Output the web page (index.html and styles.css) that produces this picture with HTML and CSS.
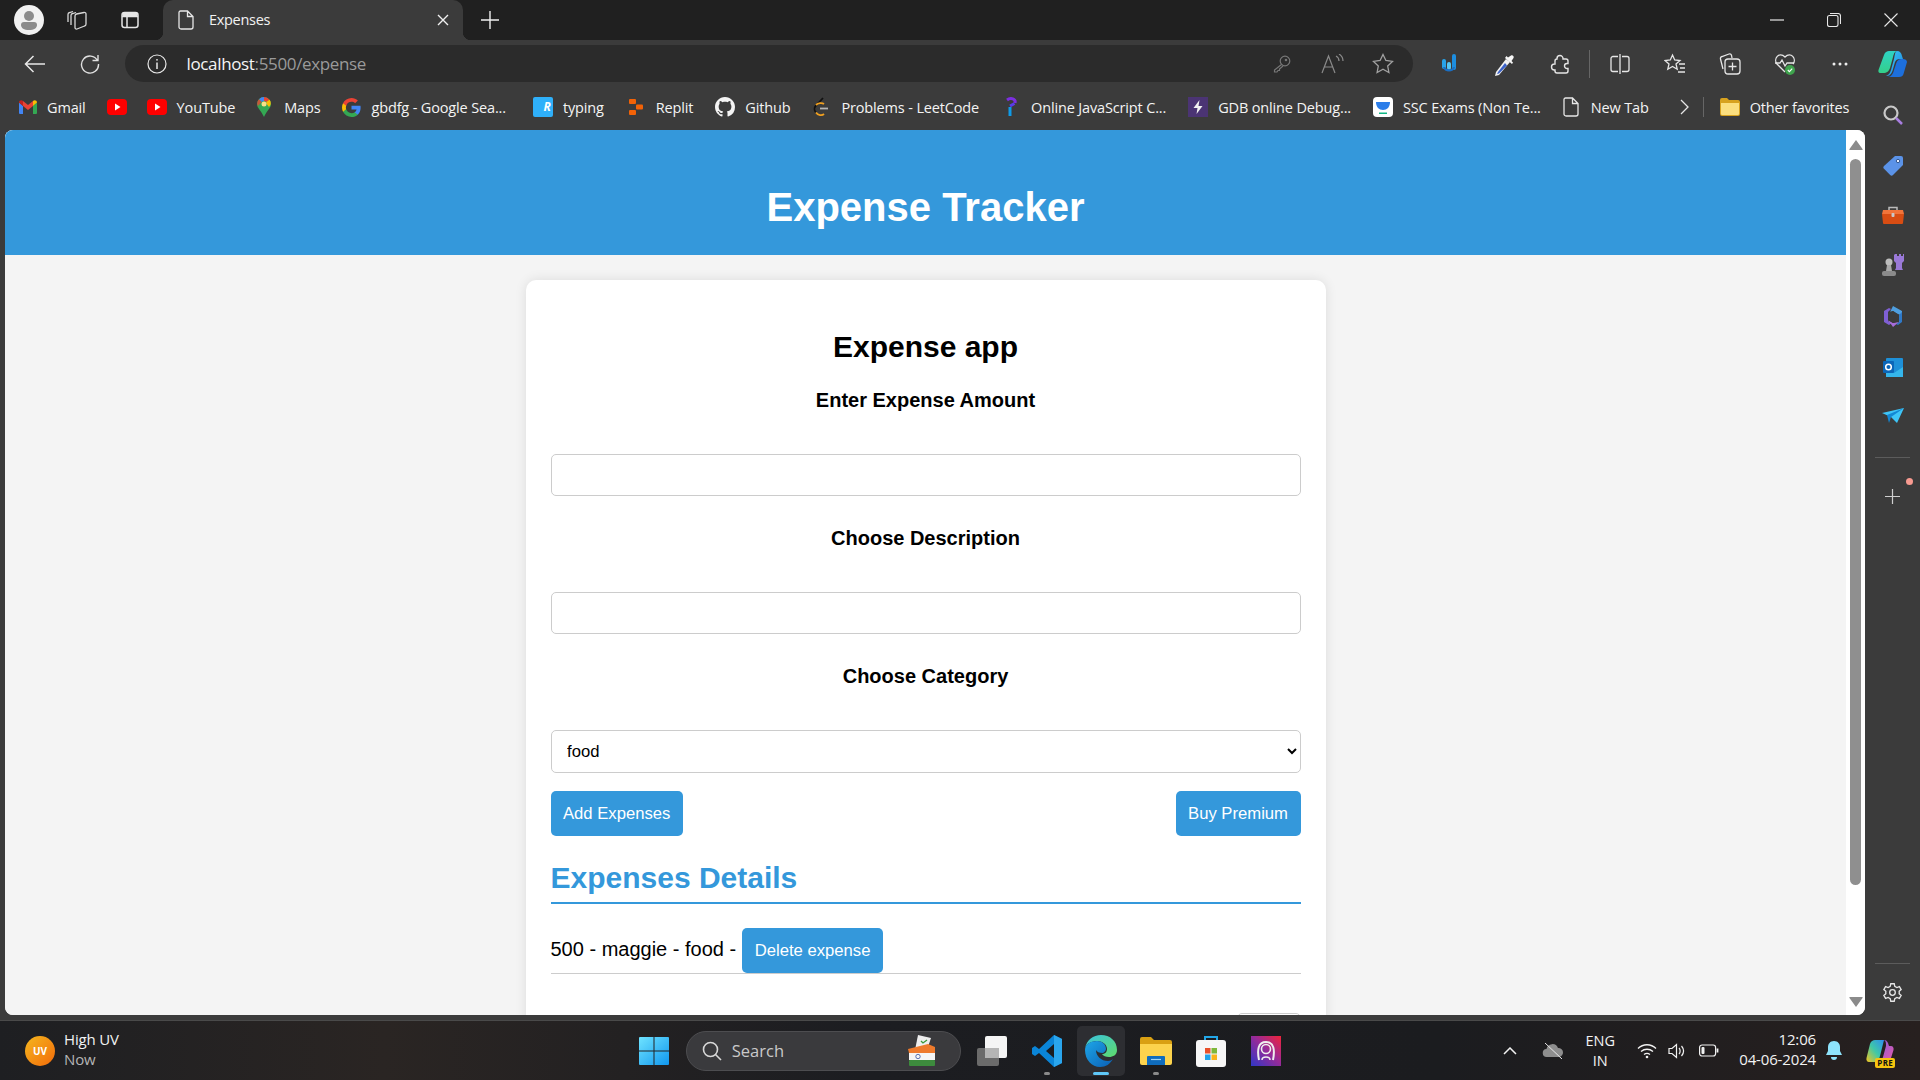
FILE: index.html
```html
<!DOCTYPE html>
<html lang="en">
<head>
<meta charset="utf-8">
<title>Expenses</title>
<link rel="stylesheet" href="styles.css">
</head>
<body>
<div class="window">
  <div class="titlebar">
    <div class="tb-slot tb-first"><svg width="30" height="30" viewBox="0 0 30 30"><circle cx="15" cy="15" r="15" fill="#f1f1f1"/><circle cx="15" cy="11" r="5" fill="#8b8b8b"/><path d="M7 20a3 3 0 0 1 3-3h10a3 3 0 0 1 3 3c0 3-3 5-8 5s-8-2-8-5z" fill="#8b8b8b"/></svg></div>
    <div class="tb-slot tb-second"><svg width="22" height="22" viewBox="0 0 22 22" fill="none" stroke="#d8d8d8" stroke-width="1.3"><path d="M2 13V5.500a2 2 0 0 1 1.500-2L7 2.500M5 16V6.500a2 2 0 0 1 1.500-2L10 3.500"/><path d="M9 7a2 2 0 0 1 1.500-2L18 3.500a1.500 1.500 0 0 1 2 1.500V15a2 2 0 0 1-1.500 2L11 20a1.500 1.500 0 0 1-2-1.500z" fill="#202020"/></svg></div>
    <div class="tb-slot"><svg width="20" height="20" viewBox="0 0 20 20" fill="none" stroke="#e6e6e6" stroke-width="1.5"><rect x="2" y="2.500" width="16" height="15" rx="2.500"/><path d="M2 6.500h16M7 6.500v11"/><path d="M2.500 3h15v3.500h-15z" fill="#e6e6e6" stroke="none"/></svg></div>
    <div class="tab">
      <svg width="16" height="20" viewBox="0 0 16 20" fill="none" stroke="#e6e6e6" stroke-width="1.3"><path d="M2.500 1h7L15 6.500V17a2 2 0 0 1-2 2H3a2 2 0 0 1-2-2V2.500A1.500 1.500 0 0 1 2.500 1zM9.500 1v5.500H15"/></svg>
      <span class="tab-title">Expenses</span>
      <svg class="tab-close" width="12" height="12" viewBox="0 0 12 12" stroke="#f0f0f0" stroke-width="1.4"><path d="M1 1l10 10M11 1L1 11"/></svg>
    </div>
    <div class="new-tab"><svg width="18" height="18" viewBox="0 0 18 18" stroke="#f0f0f0" stroke-width="1.4"><path d="M9 0v18M0 9h18"/></svg></div>
    <div class="win-controls">
      <svg width="14" height="2" viewBox="0 0 14 2"><path d="M0 1h14" stroke="#e8e8e8" stroke-width="1.2"/></svg>
      <svg width="14" height="14" viewBox="0 0 14 14" fill="none" stroke="#e8e8e8" stroke-width="1.1"><rect x=".5" y="2.500" width="10.500" height="11" rx="2"/><path d="M3 .5h8a2.500 2.500 0 0 1 2.500 2.500v8"/></svg>
      <svg width="14" height="14" viewBox="0 0 14 14" stroke="#e8e8e8" stroke-width="1.1"><path d="M.5.5l13 13M13.500.5l-13 13"/></svg>
    </div>
  </div>

  <div class="toolbar">
    <div class="t-slot"><svg width="22" height="18" viewBox="0 0 22 18" fill="none" stroke="#e8e8e8" stroke-width="1.5"><path d="M21 9H1.500M9.500 1l-8 8 8 8"/></svg></div>
    <div class="t-slot"><svg width="20" height="20" viewBox="0 0 20 20" fill="none" stroke="#e0e0e0" stroke-width="1.4"><path d="M17.500 6.500A8.500 8.500 0 1 0 18.500 10M18 1v5.500h-5.500"/></svg></div>
    <div class="address">
      <svg width="20" height="20" viewBox="0 0 20 20" fill="none" stroke="#e8e8e8" stroke-width="1.2"><circle cx="10" cy="10" r="9"/><path d="M10 8.500V15" stroke-width="1.500"/><circle cx="10" cy="5.800" r=".9" fill="#e8e8e8" stroke="none"/></svg>
      <span class="url"><span class="url-host">localhost</span>:5500/expense</span>
      <div class="addr-icons">
        <svg class="addr-key" width="18" height="18" viewBox="0 0 18 18" fill="none" stroke="#777" stroke-width="1.200"><circle cx="12" cy="6" r="4.800"/><circle cx="13" cy="5" r=".7"/><path d="M8.500 9.500L1.500 15v2h2.500l1-1.500h1.500V14L10 11"/></svg>
        <svg width="24" height="20" viewBox="0 0 24 20" fill="none" stroke="#8a8a8a" stroke-width="1.200"><path d="M1 19L7.500 2 14 19M3.500 13h8"/><path d="M15 2c2 1 3 2.500 3 5M18 0c2.500 1.500 4 3.500 4 7"/></svg>
        <svg width="22" height="21" viewBox="0 0 22 21" fill="none" stroke="#a2a2a2" stroke-width="1.300"><path d="M11 1.500l2.900 6 6.600.9-4.800 4.600 1.200 6.500-5.900-3.200-5.900 3.200 1.200-6.500L1.500 8.400l6.600-.9z"/></svg>
      </div>
    </div>
    <div class="t-slot t-first-ext"><svg width="16" height="22" viewBox="0 0 16 22"><rect x="1" y="6" width="4" height="10" rx="2" fill="#29a3e8"/><rect x="6" y="9" width="4" height="8" rx="2" fill="#55c6f2"/><rect x="11" y="1" width="4" height="16" rx="2" fill="#1d8ee0"/><path d="M2 14c1 6 11 6 12 0l-2 0c-1 3-7 3-8 0z" fill="#1a6fc4"/></svg></div>
    <div class="t-slot"><svg width="22" height="26" viewBox="0 0 22 26"><path d="M13 8L3 21l-1 4 4-1L17 11z" fill="#f2f2f2"/><path d="M12 12L5 21l-1 2 2-.5 8-8z" fill="#3b62c9"/><path d="M12 7l7 6 1-1.500-1.500-1.500 2-3c1-1.500-1-3.500-2.500-2.500l-3 2-1.500-1.500z" fill="#f7f7f7"/></svg></div>
    <div class="t-slot"><svg width="20" height="22" viewBox="0 0 20 22" fill="none" stroke="#e6e6e6" stroke-width="1.400"><path d="M8 5.500a3 3 0 0 1 6 0V6h3a2 2 0 0 1 2 2v2.500h-1a2.500 2.500 0 0 0 0 5h1V18a2 2 0 0 1-2 2H8a2 2 0 0 1-2-2v-1h-.5a3 3 0 0 1 0-6H6V8a2 2 0 0 1 2-2z"/></svg></div>
    <div class="t-sep"></div>
    <div class="t-slot"><svg width="20" height="20" viewBox="0 0 20 20" fill="none" stroke="#e6e6e6" stroke-width="1.300"><path d="M10 0v20M8 2.500H3a2 2 0 0 0-2 2v11a2 2 0 0 0 2 2h5M12 2.500h5a2 2 0 0 1 2 2v11a2 2 0 0 1-2 2h-5"/></svg></div>
    <div class="t-slot"><svg width="22" height="22" viewBox="0 0 22 22" fill="none" stroke="#e6e6e6" stroke-width="1.300"><path d="M8.500 2l2.200 5 5.300.5-4 3.500 1.200 5.200-4.700-2.800-4.700 2.800L5 11 1 7.500 6.300 7z"/><path d="M15 11h6M16 15h5M14 19h7"/></svg></div>
    <div class="t-slot"><svg width="22" height="24" viewBox="0 0 22 24" fill="none" stroke="#e6e6e6" stroke-width="1.300"><path d="M4 17L1.500 7a2 2 0 0 1 1.500-2.500L10 2a2 2 0 0 1 2.500 1.300L13 6"/><rect x="6" y="7" width="15" height="15" rx="3"/><path d="M13.500 10.500v8M9.500 14.500h8"/></svg></div>
    <div class="t-slot"><svg width="22" height="24" viewBox="0 0 22 24"><path d="M11 20L3 12C-1 7 5-1 11 5c6-6 12 2 8 7" fill="none" stroke="#e6e6e6" stroke-width="1.300"/><path d="M1 11h5l2-3 3 6 2-3h7" fill="none" stroke="#e6e6e6" stroke-width="1.300"/><circle cx="16" cy="18" r="5" fill="#3fa34d"/><path d="M13.800 18l1.600 1.600 2.800-3" fill="none" stroke="#fff" stroke-width="1.100"/></svg></div>
    <div class="t-slot"><svg width="16" height="4" viewBox="0 0 16 4" fill="#eee"><circle cx="2" cy="2" r="1.500"/><circle cx="8" cy="2" r="1.500"/><circle cx="14" cy="2" r="1.500"/></svg></div>
    <div class="copilot-slot"><svg width="30" height="27" viewBox="0 0 30 27"><defs><linearGradient id="cp1" x1="0" y1="0" x2="1" y2="1"><stop offset="0" stop-color="#3ad0f5"/><stop offset="1" stop-color="#1d7fe0"/></linearGradient><linearGradient id="cp2" x1="0" y1="0" x2="0" y2="1"><stop offset="0" stop-color="#2ed3c5"/><stop offset="1" stop-color="#34d08a"/></linearGradient></defs><path d="M11 1h9c-3 0-4 2-5 6l-3 11c-1 3-3 5-7 5H2c-1 0-2-1-1.500-3L6 5c1-3 3-4 5-4z" fill="url(#cp2)"/><path d="M19 1c3 0 4.500 2 5 5l1 3h-3c-3 0-4 1-5 3l-2 7c-1 4-3 7-6 7h-1c3-1 4-3 5-6l3-11c1-4 1-8 3-8z" fill="url(#cp1)"/><path d="M25 9c2 0 4 1 4 3l-3.500 12c-.5 2-2 3-4.500 3H10c3 0 5-3 6-7l2-6c1-3 2-5 7-5z" fill="#1d6fdc"/></svg></div>
  </div>

  <div class="bookmarks">
    <div class="bm bm-gmail"><svg width="18" height="14" viewBox="0 0 18 14"><path d="M0 2.500V13a1 1 0 0 0 1 1h3V6z" fill="#4285f4"/><path d="M18 2.500V13a1 1 0 0 1-1 1h-3V6z" fill="#34a853"/><path d="M14 1l-5 4-5-4v5l5 4 5-4z" fill="#ea4335"/><path d="M0 2.500C0 .5 2.500-.5 4 1v5z" fill="#c5221f"/><path d="M18 2.500c0-2-2.500-3-4-1.500v5z" fill="#fbbc04"/></svg><span>Gmail</span></div>
    <div class="bm bm-yt"><svg width="20" height="16" viewBox="0 0 20 16"><rect width="20" height="16" rx="4" fill="#f00"/><path d="M8 4.500L13.500 8 8 11.500z" fill="#fff"/></svg></div>
    <div class="bm"><svg width="20" height="16" viewBox="0 0 20 16"><rect width="20" height="16" rx="4" fill="#f00"/><path d="M8 4.500L13.500 8 8 11.500z" fill="#fff"/></svg><span>YouTube</span></div>
    <div class="bm bm-icon14"><svg width="14" height="20" viewBox="0 0 14 20"><path d="M7 0a7 7 0 0 1 7 7c0 4-4.500 7-7 13C4.500 14 0 11 0 7a7 7 0 0 1 7-7z" fill="#34a853"/><path d="M2 2.200A7 7 0 0 1 7 0v4a3 3 0 0 0-2.300 1z" fill="#4285f4"/><path d="M7 0a7 7 0 0 1 5.500 2.700L9.300 5A3 3 0 0 0 7 4z" fill="#ea4335"/><path d="M12.500 2.700C14.500 5 14 8 12 10L9.300 6.500 9.300 5z" fill="#fbbc04"/><path d="M2 2.200C0 4 -.3 7 1 9L4.700 5z" fill="#ea4335" opacity=".8"/><circle cx="7" cy="7" r="2.500" fill="#f8e08a"/></svg><span>Maps</span></div>
    <div class="bm bm-google"><svg width="19" height="19" viewBox="1 1 22 22"><path d="M22.560 12.250c0-.78-.07-1.530-.2-2.250H12v4.260h5.920c-.26 1.370-1.040 2.530-2.210 3.310v2.770h3.570c2.080-1.920 3.280-4.740 3.280-8.090z" fill="#4285f4"/><path d="M12 23c2.970 0 5.460-.98 7.280-2.660l-3.570-2.770c-.98.66-2.230 1.060-3.710 1.060-2.860 0-5.290-1.930-6.160-4.530H2.180v2.840C3.990 20.530 7.700 23 12 23z" fill="#34a853"/><path d="M5.840 14.090c-.22-.66-.35-1.360-.35-2.090s.13-1.430.35-2.090V7.070H2.180C1.430 8.550 1 10.220 1 12s.43 3.450 1.180 4.930l2.850-2.220.81-.62z" fill="#fbbc05"/><path d="M12 5.380c1.620 0 3.060.56 4.210 1.640l3.150-3.150C17.450 2.090 14.970 1 12 1 7.700 1 3.990 3.470 2.180 7.070l3.660 2.840c.87-2.600 3.300-4.530 6.160-4.530z" fill="#ea4335"/></svg><span>gbdfg - Google Sea...</span></div>
    <div class="bm"><span class="typing-ico">R</span><span>typing</span></div>
    <div class="bm bm-icon16"><svg width="16" height="18" viewBox="0 0 16 18" fill="#f26207"><rect x="1" y="1" width="7" height="5" rx="1"/><rect x="8" y="6.500" width="7" height="5" rx="1"/><rect x="1" y="12" width="7" height="5" rx="1"/></svg><span>Replit</span></div>
    <div class="bm bm-github"><svg width="20" height="20" viewBox="0 0 16 16" fill="#f4f4f4"><path d="M8 0C3.580 0 0 3.580 0 8c0 3.540 2.290 6.530 5.470 7.590.4.07.55-.17.55-.38 0-.19-.01-.82-.01-1.490-2.010.37-2.530-.49-2.690-.94-.09-.23-.48-.94-.82-1.130-.28-.15-.68-.52-.01-.53.63-.01 1.080.58 1.230.82.720 1.210 1.870.87 2.330.66.07-.52.28-.87.51-1.070-1.780-.2-3.640-.89-3.640-3.950 0-.87.31-1.590.82-2.150-.08-.2-.36-1.020.08-2.120 0 0 .67-.21 2.200.82.64-.18 1.320-.27 2-.27.68 0 1.360.09 2 .27 1.530-1.040 2.200-.82 2.200-.82.44 1.100.16 1.920.08 2.120.51.56.82 1.270.82 2.150 0 3.070-1.870 3.750-3.650 3.950.29.25.54.73.54 1.480 0 1.070-.01 1.930-.01 2.200 0 .21.15.46.55.38A8.013 8.013 0 0 0 16 8c0-4.420-3.580-8-8-8z"/></svg><span>Github</span></div>
    <div class="bm bm-icon16"><svg width="16" height="20" viewBox="0 0 16 20" fill="none" stroke-width="1.800"><path d="M10 1L3 8.500c-2 2-2 5 0 7" stroke="#111"/><path d="M3 15.500c2 3 6 3.500 8 1.500" stroke="#f0a020"/><path d="M3 8c2-2 6-2.500 8-1" stroke="#f0a020"/><path d="M7 11.500h8" stroke="#b5b5b5"/></svg><span>Problems - LeetCode</span></div>
    <div class="bm bm-icon12"><svg width="12" height="20" viewBox="0 0 12 20" fill="none" stroke-width="3"><path d="M2 3c4-3 9-1 8 3" stroke="#7c2fe0"/><path d="M9.500 6.500L5 9" stroke="#5a3ae8"/><path d="M5 10v9" stroke="#0f9be8"/></svg><span>Online JavaScript C...</span></div>
    <div class="bm"><svg width="20" height="20" viewBox="0 0 20 20"><rect width="20" height="20" fill="#4b3474"/><path d="M11.500 3L5.500 11h4l-1 6 6-8h-4z" fill="#f2f2f2"/></svg><span>GDB online Debug...</span></div>
    <div class="bm bm-ssc"><svg width="20" height="20" viewBox="0 0 20 20"><rect width="20" height="20" rx="4" fill="#fff"/><path d="M3 5h14c0 5-3 8-7 8s-7-3-7-8z" fill="#2b7de9"/><path d="M6 15.500h8V17H6z" fill="#12b886"/></svg><span>SSC Exams (Non Te...</span></div>
    <div class="bm bm-icon16"><svg width="16" height="20" viewBox="0 0 16 20" fill="none" stroke="#e6e6e6" stroke-width="1.300"><path d="M2.500 1h7L15 6.500V17a2 2 0 0 1-2 2H3a2 2 0 0 1-2-2V2.500A1.500 1.500 0 0 1 2.500 1zM9.500 1v5.500H15"/></svg><span>New Tab</span></div>
    <div class="bm-more"><svg width="9" height="16" viewBox="0 0 9 16" fill="none" stroke="#e6e6e6" stroke-width="1.300"><path d="M1 1l7 7-7 7"/></svg></div>
    <div class="bm-sep"></div>
    <div class="bm bm-last"><svg width="20" height="18" viewBox="0 0 20 18"><path d="M0 2a2 2 0 0 1 2-2h5l2 2h9a2 2 0 0 1 2 2v12a2 2 0 0 1-2 2H2a2 2 0 0 1-2-2z" fill="#d7a21f"/><path d="M1 5h18v11a1 1 0 0 1-1 1H2a1 1 0 0 1-1-1z" fill="#fbdf7f"/></svg><span>Other favorites</span></div>
  </div>

  <div class="main">
    <div class="page">
      <div class="viewport">
        <header class="app-header"><h1>Expense Tracker</h1></header>
        <div class="card">
          <h2 class="card-title">Expense app</h2>
          <label class="field-label">Enter Expense Amount</label>
          <input class="field" type="text">
          <label class="field-label">Choose Description</label>
          <input class="field" type="text">
          <label class="field-label">Choose Category</label>
          <select class="field field-select"><option>food</option></select>
          <div class="actions">
            <button class="btn">Add Expenses</button>
            <button class="btn">Buy Premium</button>
          </div>
          <h2 class="details-title">Expenses Details</h2>
          <ul class="expense-list">
            <li class="expense-item"><span class="expense-text">500 - maggie - food -</span><button class="btn btn-delete">Delete expense</button></li>
          </ul>
          <div class="pager"><div class="pager-box"></div></div>
        </div>
      </div>
      <div class="scrollbar">
        <svg width="14" height="10" viewBox="0 0 14 10" fill="#8b8b8b"><path d="M7 0l6.500 9a.6.6 0 0 1-.5 1H1a.6.6 0 0 1-.5-1z"/></svg>
        <div class="thumb"></div>
        <svg class="arrow-down" width="14" height="10" viewBox="0 0 14 10" fill="#8b8b8b"><path d="M7 10L.5 1a.6.6 0 0 1 .5-1h12a.6.6 0 0 1 .5 1z"/></svg>
      </div>
    </div>
    <aside class="sidebar">
      <svg class="s-search" width="22" height="22" viewBox="0 0 22 22" fill="none"><circle cx="9" cy="9" r="6.500" stroke="#c8c8c8" stroke-width="2.200"/><path d="M14 14l6 6" stroke="#a87ee0" stroke-width="2.500"/></svg>
      <svg class="s-ico" width="20" height="20" viewBox="0 0 20 20"><path d="M12 0h6a2 2 0 0 1 2 2v7L10 19a2 2 0 0 1-2.800 0L1 12.800A2 2 0 0 1 1 10z" fill="#5b93e8"/><circle cx="15" cy="5" r="1.700" fill="#e8f0ff" stroke="#33588f"/></svg>
      <svg class="s-ico" width="22" height="18" viewBox="0 0 22 18"><path d="M7 4V1.500h8V4" fill="none" stroke="#bbb" stroke-width="1.500"/><path d="M1 4h20l1 4H0z" fill="#f2743a"/><path d="M0 8h22l-1 9a1 1 0 0 1-1 1H2a1 1 0 0 1-1-1z" fill="#d84d13"/><rect x="9.500" y="7" width="3" height="4" rx="1" fill="#c9c9c9"/></svg>
      <svg class="s-ico" width="22" height="22" viewBox="0 0 22 22"><path d="M13 0h2v2h2V0h2v2h2V0h1v7l-2 2v5l1 2H13l1-2V9l-2-2V1z" fill="#9a79d8"/><circle cx="7" cy="8" r="3.500" fill="#bdbdbd"/><path d="M5 11h4l1 6H4z" fill="#a9a9a9"/><rect y="17" width="14" height="5" rx="2" fill="#8b8b8b"/></svg>
      <svg class="s-ico" width="20" height="22" viewBox="0 0 20 22"><path d="M10 0l9 5v5l-6-3-3-2-4 3z" fill="#4e9fe0"/><path d="M19 6v10l-4 3-2-1 3-2V9z" fill="#2f79c8"/><path d="M1 5l5-3 2 1-3 3v9l4 2-3 2-5-3z" fill="#7f5fd4"/><path d="M5 14l5 3 7-2-7 6z" fill="#a66cd8"/><path d="M5 6l5-1 6 4v7l-6 1-5-3z" fill="#3b3b3b"/></svg>
      <svg class="s-ico" width="20" height="20" viewBox="0 0 20 20"><rect x="3" y="0" width="17" height="19" rx="1" fill="#1e90d8"/><path d="M3 10l8 5 9-6v10H3z" fill="#35b6ec"/><rect x="0" y="3" width="11" height="12" rx="1" fill="#0b66b8"/><circle cx="5.500" cy="9" r="2.800" fill="none" stroke="#fff" stroke-width="1.500"/></svg>
      <svg class="s-ico" width="22" height="16" viewBox="0 0 22 16"><path d="M0 5L22 0 15 15 9 9z" fill="#3ec5f7"/><path d="M5 7L22 0 9 9l-2 6z" fill="#1287d4"/></svg>
      <div class="s-sep"></div>
      <div class="s-add">
        <svg width="15" height="15" viewBox="0 0 15 15" stroke="#cfcfcf" stroke-width="1.200"><path d="M7.500 0v15M0 7.500h15"/></svg>
        <span class="s-dot"></span>
      </div>
      <div class="s-spacer"></div>
      <div class="s-sep s-sep-bottom"></div>
      <svg class="s-gear" width="21" height="21" viewBox="0 0 24 24" fill="none" stroke="#e6e6e6" stroke-width="1.500"><circle cx="12" cy="12" r="3.200"/><path d="M10 2h4l.6 3 2.400 1.300 2.900-1 2 3.400-2.300 2 .1 1.300-.1 1.300 2.300 2-2 3.400-2.900-1-2.400 1.300-.6 3h-4l-.6-3L7 17.700l-2.900 1-2-3.400 2.300-2L4.300 12l.1-1.300-2.300-2 2-3.400 2.900 1L9.400 5z"/></svg>
    </aside>
  </div>

  <footer class="taskbar">
    <div class="tk-left">
      <span class="uv">UV</span>
      <div class="weather"><span class="w-main">High UV</span><span class="w-sub">Now</span></div>
    </div>
    <div class="tk-center">
      <svg class="start" width="30" height="30" viewBox="0 0 30 30"><defs><linearGradient id="wn" x1="0" y1="0" x2="1" y2="1"><stop offset="0" stop-color="#6fe3ff"/><stop offset="1" stop-color="#1097ee"/></linearGradient></defs><path d="M1 1h13.500v13.500H0V2a1 1 0 0 1 1-1zM15.500 1H29a1 1 0 0 1 1 1v12.500H15.500zM0 15.500h14.500V29H1a1 1 0 0 1-1-1zM15.500 15.500H30V28a1 1 0 0 1-1 1H15.500z" fill="url(#wn)"/></svg>
      <div class="search-pill">
        <svg width="20" height="20" viewBox="0 0 20 20" fill="none" stroke="#d8d8d8" stroke-width="1.600"><circle cx="8.500" cy="8.500" r="7"/><path d="M13.500 13.500L19 19"/></svg>
        <span class="search-text">Search</span>
        <svg class="ballot" width="28" height="32" viewBox="0 0 28 32"><path d="M10 0l13 3-4 12H7z" fill="#eee"/><path d="M13 6l2 2 4-3" fill="none" stroke="#3a9a3a" stroke-width="1.300"/><path d="M0 14l20-5 7 3v6H1z" fill="#ee7a2c"/><rect x="1" y="18" width="26" height="7" fill="#f5f5f5"/><rect x="1" y="25" width="26" height="6" rx="1" fill="#3d8b3d"/><circle cx="10" cy="21.500" r="2.200" fill="none" stroke="#3550a0" stroke-width=".8"/></svg>
      </div>
      <div class="tk-app"><svg width="30" height="30" viewBox="0 0 30 30"><rect x="0" y="12" width="22" height="18" rx="2" fill="#6b6b6b"/><rect x="8" y="0" width="22" height="22" rx="2" fill="#f5f5f5"/><rect x="8" y="12" width="14" height="10" fill="#b5b5b5"/></svg></div>
      <div class="tk-app tk-run"><svg width="30" height="32" viewBox="0 0 30 32"><path d="M22 0l8 4v24l-8 4L7 18l-4 3-3-2V13l3-2 4 3zm0 9l-8 7 8 7z" fill="#0a85d8"/><path d="M22 0l8 4v24l-8 4z" fill="#2aa6ee"/></svg></div>
      <div class="tk-app tk-active"><svg width="32" height="32" viewBox="0 0 32 32"><defs><linearGradient id="eg" x1="0" y1="0" x2="1" y2="1"><stop offset="0" stop-color="#1ea6e8"/><stop offset="1" stop-color="#0a5fb4"/></linearGradient><linearGradient id="eg2" x1="0" y1="0" x2="1" y2="1"><stop offset="0" stop-color="#39c2e0"/><stop offset="1" stop-color="#5fdc6a"/></linearGradient></defs><path d="M16 0c9 0 16 6 16 15 0 5-4 7-8 7-3 0-6-1-7-3 3 0 5-2 5-5 0-5-5-8-10-8S2 8 0 13C2 5 8 0 16 0z" fill="url(#eg2)"/><path d="M0 15C0 9 6 6 12 6c5 0 9 3 9 8 0 1-1 3-3 4-4 0-6-1-7-3 0 6 5 11 12 11 2 0 4-1 5-2-3 5-7 8-13 8C7 32 0 25 0 15z" fill="url(#eg)"/></svg></div>
      <div class="tk-app tk-run"><svg width="32" height="28" viewBox="0 0 32 28"><path d="M0 2a2 2 0 0 1 2-2h9l3 3h16a2 2 0 0 1 2 2v4H0z" fill="#d9a013"/><path d="M0 7h32v19a2 2 0 0 1-2 2H2a2 2 0 0 1-2-2z" fill="#fcd34d"/><path d="M8 19h16a1 1 0 0 1 1 1v8H7v-8a1 1 0 0 1 1-1z" fill="#0f6cbd"/><path d="M11 22.500h10" stroke="#9fd3f5" stroke-width="1.200"/></svg></div>
      <div class="tk-app"><svg width="30" height="32" viewBox="0 0 30 32"><path d="M9 7V2h12v5" fill="none" stroke="#22a7e8" stroke-width="2"/><rect y="5" width="30" height="27" rx="3" fill="#f7f7f7"/><rect x="9" y="13" width="5.500" height="5.500" fill="#e8502a"/><rect x="15.500" y="13" width="5.500" height="5.500" fill="#7db83a"/><rect x="9" y="19.500" width="5.500" height="5.500" fill="#1fa2ea"/><rect x="15.500" y="19.500" width="5.500" height="5.500" fill="#f9b41a"/></svg></div>
      <div class="tk-app"><svg width="30" height="30" viewBox="0 0 30 30"><defs><linearGradient id="pm" x1="0" y1="1" x2="1" y2="0"><stop offset="0" stop-color="#2f37c8"/><stop offset=".55" stop-color="#9a2a96"/><stop offset="1" stop-color="#f0243a"/></linearGradient></defs><rect width="30" height="30" fill="url(#pm)"/><path d="M8 24C6 14 7 6 15 6s9 8 7 18" fill="none" stroke="#eee" stroke-width="2"/><circle cx="15" cy="13" r="4.500" fill="none" stroke="#eee" stroke-width="1.600"/><path d="M11 24c0-4 8-4 8 0" fill="none" stroke="#eee" stroke-width="1.500"/></svg></div>
    </div>
    <div class="tk-right">
      <svg class="tr-chev" width="14" height="8" viewBox="0 0 14 8" fill="none" stroke="#f2f2f2" stroke-width="1.500"><path d="M1 7l6-6 6 6"/></svg>
      <svg class="tr-cloud" width="22" height="16" viewBox="0 0 22 16"><path d="M5 14a4 4 0 0 1-.5-8A6 6 0 0 1 16 5a4.500 4.500 0 0 1 1 9z" fill="#8e8e8e"/><path d="M3 0l17 16" stroke="#e8e8e8" stroke-width="1"/></svg>
      <div class="tr-lang"><span>ENG</span><span>IN</span></div>
      <svg class="tr-wifi" width="20" height="16" viewBox="0 0 20 16" fill="none" stroke="#f2f2f2" stroke-width="1.300"><path d="M1 5.500c5-5 13-5 18 0M4 8.500c3.500-3 8.500-3 12 0M7 11.500c2-1.500 4-1.500 6 0"/><circle cx="10" cy="14" r="1.300" fill="#f2f2f2" stroke="none"/></svg>
      <svg class="tr-vol" width="18" height="16" viewBox="0 0 18 16" fill="none" stroke="#f2f2f2" stroke-width="1.200"><path d="M1 5.500h3L8.500 1.500v13L4 10.500H1z"/><path d="M11 5c1.500 1.500 1.500 4.500 0 6M13.500 3c2.500 3 2.500 7 0 10"/></svg>
      <svg class="tr-bat" width="20" height="13" viewBox="0 0 20 13" fill="none" stroke="#f2f2f2" stroke-width="1.200"><rect x=".6" y="1" width="16" height="11" rx="2.500"/><rect x="2.500" y="3" width="3" height="7" rx="1" fill="#f2f2f2" stroke="none"/><path d="M18.500 4.500v4" stroke-width="1.800"/></svg>
      <div class="tr-clock"><span>12:06</span><span>04-06-2024</span></div>
      <svg class="tr-bell" width="16" height="20" viewBox="0 0 16 20" fill="#8ee3fb"><path d="M8 0c4 0 6 3 6 6v4l2 4H0l2-4V6c0-3 2-6 6-6z"/><path d="M5 16h6a3 3 0 0 1-6 0z"/></svg>
      <div class="tr-copilot">
        <svg width="28" height="22" viewBox="0 0 28 22"><defs><linearGradient id="cq" x1="0" y1="1" x2="1" y2="0"><stop offset="0" stop-color="#f5c51c"/><stop offset=".5" stop-color="#3fc8a8"/><stop offset="1" stop-color="#2d8ef0"/></linearGradient><linearGradient id="cr" x1="0" y1="0" x2="1" y2="1"><stop offset="0" stop-color="#7f5ae0"/><stop offset="1" stop-color="#e85ca8"/></linearGradient></defs><path d="M9 0h9l-4 16c-1 4-3 6-7 6H3c-2 0-3-2-2.500-4L4 4c1-3 3-4 5-4z" fill="url(#cq)"/><path d="M18 0c2 0 3 1 4 3l1 3h2c2 0 3 2 2.500 4L25 18c-1 3-3 4-5 4h-8c3 0 4-2 5-5l3-11C20 3 20 1 18 0z" fill="url(#cr)"/></svg>
        <span class="pre">PRE</span>
      </div>
    </div>
  </footer>
</div>
</body>
</html>
```

FILE: styles.css
```css
* { box-sizing: border-box; }
html, body { margin: 0; padding: 0; height: 100%; overflow: hidden; }
body { font-family: "Open Sans", "Noto Sans", sans-serif; color: #fff; background: #3b3b3b; }
svg { display: block; flex: none; }
.window { display: flex; flex-direction: column; width: 1920px; height: 1080px; }

.titlebar { display: flex; align-items: center; height: 40px; background: #202020; flex: none; }
.tb-slot { width: 53px; display: flex; justify-content: center; align-items: center; }
.tb-first { margin-left: 2px; }
.tb-second { margin-left: -5px; }
.tab { position: relative; display: flex; align-items: center; align-self: flex-end; width: 300px; height: 40px; margin-left: 7px; padding: 0 14px 0 15px; background: #3b3b3b; border-radius: 10px 10px 0 0; }
.tab::before, .tab::after { content: ""; position: absolute; bottom: 0; width: 8px; height: 8px; }
.tab::before { left: -8px; background: radial-gradient(circle at 0 0, #202020 8px, #3b3b3b 8.5px); }
.tab::after { right: -8px; background: radial-gradient(circle at 100% 0, #202020 8px, #3b3b3b 8.5px); }
.tab-title { margin: -2px 0 0 15px; font-size: 14.500px; letter-spacing: -.3px; color: #f2f2f2; }
.tab-close { margin-left: auto; }
.new-tab { margin-left: 18px; }
.win-controls { display: flex; align-items: center; gap: 43px; margin-left: auto; margin-right: 22px; }

.toolbar { display: flex; align-items: center; height: 42px; padding: 0 0 0 7.500px; background: #3b3b3b; flex: none; align-self: stretch; }
.t-slot { width: 55px; height: 37px; display: flex; justify-content: center; align-items: center; margin-top: 5px; }
.t-sep { width: 6px; margin-top: 5px; height: 28px; position: relative; }
.t-sep::before { content: ""; display: block; width: 1px; height: 100%; margin: 0 auto; background: #666; }
.t-first-ext { margin-left: 9px; }
.address { display: flex; align-items: center; width: 1288px; height: 37px; margin: 5px 0 0 7px; padding: 0 19px 0 22px; border-radius: 19px; background: #2b2b2b; }
.url { margin-left: 20px; font-size: 17px; letter-spacing: -.35px; color: #9a9a9a; }
.url-host { color: #f5f5f5; }
.addr-icons { display: flex; align-items: center; gap: 27px; margin-left: auto; }
.addr-key { margin-right: 3px; }
.copilot-slot { width: 50px; display: flex; justify-content: center; margin-top: 5px; }

.bookmarks { display: flex; align-items: center; height: 48px; padding: 2px 0 0 19px; background: #3b3b3b; flex: none; font-size: 14.500px; letter-spacing: -.15px; color: #f4f4f4; white-space: nowrap; }
.bm { display: flex; align-items: center; gap: 10px; margin-right: 22px; }
.bm-gmail { margin-right: 21px; }
.bm-yt { margin-right: 20px; }
.bm-google { margin-right: 27px; }
.bm-github { margin-right: 21px; }
.bm-ssc { margin-right: 20px; }
.bm-icon14 svg { margin: 0 3px 0 0; }
.bm-icon16 svg { margin: 0 2px; }
.bm-icon12 svg { margin: 0 4px; }
.typing-ico { width: 20px; height: 20px; border-radius: 2px; background: #2fb0fa; font-size: 12px; font-weight: 700; font-style: italic; line-height: 20px; text-align: right; padding-right: 2px; color: #fff; letter-spacing: 0; }
.bm-more { margin-left: 9px; }
.bm-sep { width: 1px; height: 20px; margin-left: 14px; background: #666; }
.bm-last { margin: 0 0 0 16px; }

.main { display: flex; flex: none; height: 885px; padding-left: 5px; }
.page { display: flex; width: 1860px; height: 885px; overflow: hidden; border-radius: 8px; background: #fff; flex: none; }
.viewport { width: 1841px; height: 885px; overflow: hidden; background: #f4f4f4; color: #000; font-family: "Liberation Sans", Arial, sans-serif; flex: none; }
.app-header { display: flex; align-items: center; justify-content: center; height: 125px; padding-top: 28px; background: #3498db; }
.app-header h1 { margin: 0; font-size: 40px; line-height: 46px; font-weight: 700; color: #fff; }
.card { width: 800px; margin: 25px auto 0; padding: 25px; background: #fff; border-radius: 10px; box-shadow: 0 0 12px rgba(0,0,0,.1); text-align: center; }
.card-title { margin: 25px 0 24.500px; font-size: 30px; line-height: 34px; font-weight: 700; }
.field-label { display: block; font-size: 20px; line-height: 23px; font-weight: 700; }
.field { display: block; width: 100%; height: 42.500px; margin: 42px 0 30.500px; padding: 0 14px; border: 1.250px solid #ccc; border-radius: 5px; background: #fff; font-family: "Liberation Sans", Arial, sans-serif; font-size: 16.670px; }
.field-select { height: 43px; margin: 42.500px 0 18px; padding: 0 11.500px; }
.actions { display: flex; justify-content: space-between; }
.btn { height: 45px; padding: 0 12.500px; border: 0; border-radius: 5px; background: #3498db; color: #fff; font-family: "Liberation Sans", Arial, sans-serif; font-size: 16.670px; }
.details-title { margin: 24px 0 24px; padding-bottom: 6px; border-bottom: 2px solid #3498db; color: #3498db; font-size: 30px; line-height: 36px; font-weight: 700; text-align: left; }
.expense-list { margin: 0; padding: 0; list-style: none; text-align: left; }
.expense-item { display: flex; gap: 6px; align-items: flex-start; height: 46px; padding: 0; border-bottom: 1.250px solid #ccc; font-size: 20px; white-space: pre; }
.expense-text { line-height: 43px; }
.btn-delete { flex: none; }
.pager { display: flex; justify-content: flex-end; margin-top: 39px; }
.pager-box { width: 64px; height: 40px; border: 1.250px solid #ccc; border-radius: 5px; }

.scrollbar { position: relative; display: flex; flex-direction: column; align-items: center; width: 19px; padding-top: 10px; background: #fff; flex: none; }
.thumb { width: 11px; height: 726px; margin-top: 9px; border-radius: 6px; background: #8f8f8f; }
.arrow-down { margin-top: auto; margin-bottom: 8px; }

.sidebar { position: relative; display: flex; flex-direction: column; align-items: center; width: 55px; height: 915px; margin-top: -30px; flex: none; }
.sidebar svg { flex: none; }
.s-search { margin-top: 4px; }
.s-ico { margin-top: 30px; }
.s-sep { width: 35px; height: 1px; margin-top: 33px; background: #5c5c5c; }
.s-add { position: relative; margin-top: 31px; }
.s-dot { position: absolute; right: -13px; top: -11px; width: 7px; height: 7px; border-radius: 50%; background: #f79a90; }
.s-spacer { flex: 1; }
.s-sep-bottom { margin: 0; }
.s-gear { margin: 18px 0 12px; }

.taskbar { display: grid; grid-template-columns: 1fr auto 1fr; align-items: center; height: 60px; margin-top: 5px; padding: 0; border-top: 1px solid #4a4a4a; background: linear-gradient(90deg, #1e1f22 0%, #2a2523 20%, #1c1d21 45%, #1b1c1f 75%, #27201f 100%); flex: none; }
.tk-left { display: flex; align-items: center; padding-left: 25px; }
.uv { display: block; width: 30px; height: 30px; border-radius: 50%; background: linear-gradient(135deg, #f4b71e, #f36b0a); color: #fff; font-size: 10px; font-weight: 700; line-height: 30px; text-align: center; }
.weather { display: flex; flex-direction: column; margin: -3px 0 0 9px; font-size: 15px; line-height: 20px; letter-spacing: -.15px; }
.w-main { color: #f2f2f2; }
.w-sub { color: #b5b5b5; }
.tk-center { display: flex; align-items: center; margin-left: 12px; }
.start { margin-right: 17px; }
.search-pill { display: flex; align-items: center; width: 275px; height: 40px; padding: 0 24px 0 15px; margin-right: 3.500px; border: 1px solid #4d4d50; border-radius: 20px; background: #3a3a3d; }
.search-text { margin-left: 10px; font-size: 16.500px; color: #c9c9c9; }
.ballot { margin-left: auto; }
.tk-app { position: relative; display: flex; align-items: center; justify-content: center; width: 55px; height: 50px; }
.tk-run::after, .tk-active::after { content: ""; position: absolute; bottom: 1px; left: 50%; width: 6px; height: 3px; margin-left: -3px; border-radius: 2px; background: #8a8a8a; }
.tk-active { border-radius: 5px; background: #2d2e32; width: 48px; margin: 0 3px; }
.tk-active::after { width: 16px; margin-left: -8px; background: #5fc8f8; }
.tk-right { position: relative; display: flex; align-items: center; justify-content: flex-end; padding-right: 26px; }
.tr-chev { margin-right: 25px; }
.tr-cloud { margin-right: 19px; }
.tr-lang { display: flex; flex-direction: column; align-items: center; width: 34px; margin-right: 20px; font-size: 14.500px; line-height: 20px; letter-spacing: -.1px; color: #f2f2f2; }
.tr-wifi { margin-right: 11px; }
.tr-vol { margin-right: 13px; }
.tr-bat { margin-right: 20px; }
.tr-clock { display: flex; flex-direction: column; align-items: flex-end; margin-top: -3px; font-size: 15px; line-height: 20px; letter-spacing: -.15px; color: #f2f2f2; }
.tr-bell { margin: 0 24px 0 10px; }
.tr-copilot { position: relative; }
.pre { position: absolute; right: -1px; bottom: -6px; padding: 0 2px; border-radius: 2px; background: #f7c40f; color: #111; font-size: 8px; font-weight: 700; line-height: 10px; letter-spacing: .3px; }
```
